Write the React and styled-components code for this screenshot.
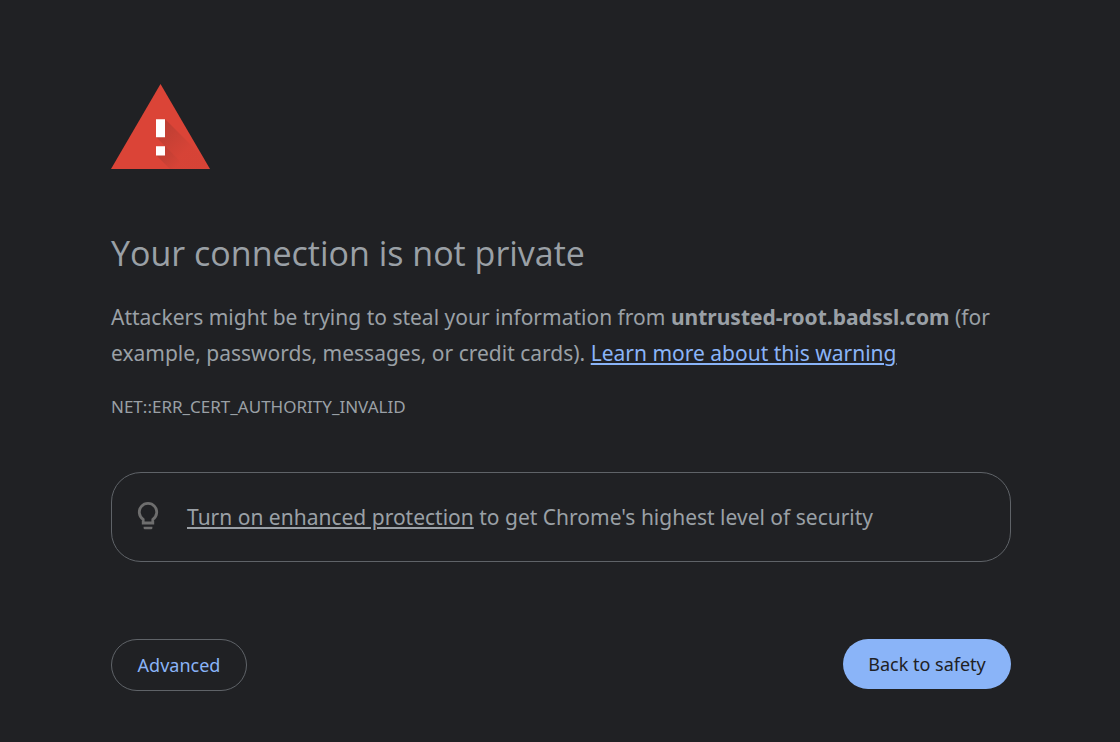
import React from 'react';
import styled, { createGlobalStyle } from 'styled-components';

const GlobalStyle = createGlobalStyle`
  * {
    box-sizing: border-box;
  }

  body {
    margin: 0;
    background-color: #202124;
    color: #9aa0a6;
    font-family: 'Noto Sans', 'Open Sans', sans-serif;
    font-size: 21px;
    line-height: 36px;
  }
`;

const Page = styled.main`
  width: 100%;
  max-width: 950px;
  margin: 0 auto;
  padding: 72px 24px 48px 26px;
`;

const WarningIcon = styled.svg`
  display: block;
  width: 99px;
  height: 108px;
`;

const Title = styled.h1`
  margin: 49px 0 22px;
  font-family: 'Open Sans', 'Noto Sans', sans-serif;
  font-size: 34px;
  font-weight: 400;
  line-height: 48px;
`;

const Message = styled.p`
  margin: 0;
`;

const Link = styled.a`
  color: ${(props) => (props.$plain ? 'inherit' : '#8ab4f8')};
  text-decoration: underline;
  text-decoration-thickness: 2px;
  text-underline-offset: 2px;
`;

const ErrorCode = styled.div`
  margin-top: 24px;
  font-size: 17px;
  line-height: 24px;
`;

const Promo = styled.section`
  display: flex;
  align-items: center;
  gap: 21px;
  margin-top: 53px;
  padding: 26px 18px;
  border: 1px solid #5f6368;
  border-radius: 30px;
`;

const BulbIcon = styled.svg`
  flex: none;
  width: 36px;
  height: 36px;
  fill: #6e6e6e;
`;

const Actions = styled.div`
  display: flex;
  justify-content: space-between;
  align-items: flex-start;
  margin-top: 77px;
`;

const Button = styled.button`
  min-width: ${(props) => (props.$primary ? '168px' : '136px')};
  height: ${(props) => (props.$primary ? '50px' : '52px')};
  padding: 0 24px;
  border: ${(props) => (props.$primary ? 'none' : '1px solid #5f6368')};
  border-radius: 26px;
  background-color: ${(props) => (props.$primary ? '#8ab4f8' : 'transparent')};
  color: ${(props) => (props.$primary ? '#202124' : '#8ab4f8')};
  font-family: inherit;
  font-size: 18px;
  line-height: 24px;
  cursor: pointer;
`;

const Warning = () => (
  <WarningIcon viewBox="0 0 99 108" aria-hidden="true">
    <defs>
      <linearGradient id="shade" gradientUnits="userSpaceOnUse" x1="50" y1="52" x2="76" y2="78">
        <stop offset="0" stopColor="#3e2723" stopOpacity="0.2" />
        <stop offset="1" stopColor="#3e2723" stopOpacity="0.03" />
      </linearGradient>
      <linearGradient id="dotShade" gradientUnits="userSpaceOnUse" x1="50" y1="78" x2="66" y2="94">
        <stop offset="0" stopColor="#3e2723" stopOpacity="0.2" />
        <stop offset="1" stopColor="#3e2723" stopOpacity="0.03" />
      </linearGradient>
      <clipPath id="triangle">
        <path d="M49.5 12 99 97H0Z" />
      </clipPath>
    </defs>
    <path d="M49.5 12 99 97H0Z" fill="#db4437" />
    <g clipPath="url(#triangle)">
      <path d="M54 47 104 97H77L45 65H54Z" fill="url(#shade)" />
      <path d="M54 74 77 97H59L45 83H54Z" fill="url(#dotShade)" />
    </g>
    <path d="M45 47.300h9v18h-9zM45 74.300h9v9.200h-9z" fill="#fff" />
  </WarningIcon>
);

const Bulb = () => (
  <BulbIcon viewBox="0 0 36 36" aria-hidden="true">
    <path
      d="M13.200 24v-3.600a8.700 8.700 0 1 1 9.600 0v3.600z"
      fill="none"
      stroke="#6e6e6e"
      strokeWidth="2.800"
    />
    <path d="M13.600 27.700h8.800v1.300q0 1.300-1.300 1.300h-6.200q-1.300 0-1.300-1.300z" />
  </BulbIcon>
);

const App = () => {
  return (
    <>
      <GlobalStyle />
      <Page>
        <Warning />
        <Title>Your connection is not private</Title>
        <Message>
          Attackers might be trying to steal your information from{' '}
          <strong>untrusted-root.badssl.com</strong> (for example, passwords, messages, or credit
          cards). <Link href="#learn-more">Learn more about this warning</Link>
        </Message>
        <ErrorCode>NET::ERR_CERT_AUTHORITY_INVALID</ErrorCode>
        <Promo>
          <Bulb />
          <Message>
            <Link href="#enhanced-protection" $plain>
              Turn on enhanced protection
            </Link>{' '}
            to get Chrome's highest level of security
          </Message>
        </Promo>
        <Actions>
          <Button type="button">Advanced</Button>
          <Button type="button" $primary>
            Back to safety
          </Button>
        </Actions>
      </Page>
    </>
  );
};

export default App;
